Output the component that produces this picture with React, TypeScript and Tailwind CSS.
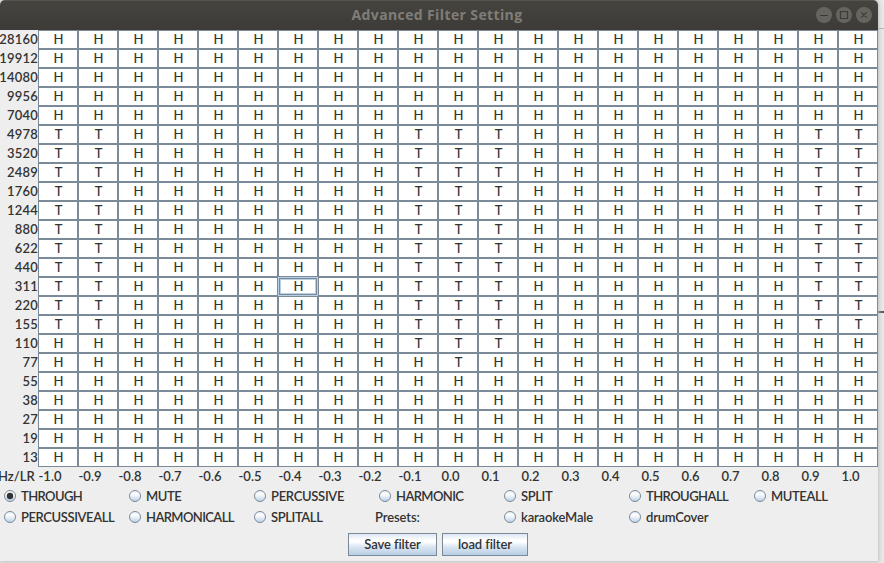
const frequencies = [
  '28160', '19912', '14080', '9956', '7040', '4978', '3520', '2489', '1760', '1244', '880', '622',
  '440', '311', '220', '155', '110', '77', '55', '38', '27', '19', '13',
];
const pans = [
  '-1.0', '-0.9', '-0.8', '-0.7', '-0.6', '-0.5', '-0.4', '-0.3', '-0.2', '-0.1', '0.0',
  '0.1', '0.2', '0.3', '0.4', '0.5', '0.6', '0.7', '0.8', '0.9', '1.0',
];

function modeAt(row: number, col: number) {
  const edge = col < 2 || col > 18;
  const center = col >= 9 && col <= 11;
  if (row >= 5 && row <= 15 && (edge || center)) return 'T';
  if (row === 16 && center) return 'T';
  if (row === 17 && col === 10) return 'T';
  return 'H';
}

function Cell({ row, col }: { row: number; col: number }) {
  const focused = row === 13 && col === 6;
  return (
    <div className={`h-[19px] w-10 border bg-white ${focused ? 'border-[#b8cfe5]' : 'border-[#7a8a99]'}`}>
      <div
        className={`flex h-full items-center justify-center pl-px text-[13px] font-medium leading-none ${
          focused ? 'shadow-[inset_0_0_0_1px_#7a8a99,inset_0_0_0_2px_#b8cfe5]' : ''
        }`}
      >
        <span>{modeAt(row, col)}</span>
      </div>
    </div>
  );
}

function Radio({ label, checked = false, spacing }: { label: string; checked?: boolean; spacing: string }) {
  return (
    <div className="flex h-[21px] w-[125px] items-center">
      <svg className="mb-px ml-1 mr-[5px] h-3 w-3 shrink-0" viewBox="0 0 12 12">
        <circle cx="6" cy="6" r="5.5" fill="url(#metal)" stroke="#7a8a99" />
        {checked && <circle cx="6" cy="6" r="3.2" fill="#333" />}
      </svg>
      <span className={`whitespace-nowrap ${spacing}`}>{label}</span>
    </div>
  );
}

function Button({ label, width }: { label: string; width: string }) {
  return (
    <button
      className={`h-[23px] border border-[#7a8a99] bg-[linear-gradient(#dde8f3_0%,#ffffff_30%,#ffffff_38%,#dde8f3_58%,#b8cfe5_100%)] leading-none ${width}`}
    >
      {label}
    </button>
  );
}

export default function App() {
  return (
    <div className="relative h-[563px] w-[884px] overflow-hidden bg-[#e9e9e9] font-[Lato,sans-serif] text-[13px] font-semibold leading-none text-[#333]">
      <svg className="absolute h-0 w-0">
        <defs>
          <linearGradient id="metal" x1="0" y1="0" x2="0" y2="1">
            <stop offset="0" stopColor="#e3edf6" />
            <stop offset=".3" stopColor="#fff" />
            <stop offset=".5" stopColor="#edf3f9" />
            <stop offset="1" stopColor="#b8cfe5" />
          </linearGradient>
        </defs>
      </svg>
      <div className="absolute right-0 top-7 h-px w-[6px] bg-[#b5b5b5]" />
      <div className="absolute right-0 top-[311px] h-[2px] w-[6px] bg-[#555]" />
      <main className="relative h-[561px] w-[878px] overflow-hidden rounded-t-[5px] bg-[#eee] shadow-[0_0_4px_1px_#bdbdbd]">
        <header className="relative flex h-[30px] items-center justify-center border-t border-[#55534d] bg-linear-to-b from-[#45443f] to-[#3c3b37]">
          <h1 className="-translate-x-[2px] -translate-y-px font-['Open_Sans',sans-serif] text-[14px] font-bold tracking-[0.38px] text-[#807d78]">
            Advanced Filter Setting
          </h1>
          <svg className="absolute right-[5px] top-[5px] h-[18px] w-[58px]" viewBox="0 0 58 18" fill="none" stroke="#3c3b37">
            <g fill="#66645e" stroke="none">
              <circle cx="9" cy="9" r="8" />
              <circle cx="29" cy="9" r="8" />
              <circle cx="49" cy="9" r="8" />
            </g>
            <path d="M5 9.5h8M25.5 5.5h7v7h-7zM46.3 6.3l5.4 5.4M51.7 6.3l-5.4 5.4" strokeWidth="1.2" />
          </svg>
        </header>
        <section>
          {frequencies.map((frequency, row) => (
            <div key={frequency} className="flex">
              <div className="flex h-[19px] w-[38px] items-center justify-end tracking-[0.2px]">
                <span>{frequency}</span>
              </div>
              {pans.map((pan, col) => (
                <Cell key={pan} row={row} col={col} />
              ))}
            </div>
          ))}
          <div className="flex h-[19px] items-center">
            <span className="-ml-[2px] w-10 whitespace-nowrap">Hz/LR</span>
            {pans.map((pan, i) => (
              <span key={pan} className={`w-10 ${i < 10 ? 'pl-[0.5px]' : 'pl-[3.5px]'}`}>{pan}</span>
            ))}
          </div>
        </section>
        <section className="flex">
          <Radio label="THROUGH" checked spacing="tracking-[-0.6px]" />
          <Radio label="MUTE" spacing="tracking-[-0.4px]" />
          <Radio label="PERCUSSIVE" spacing="tracking-[-0.3px]" />
          <Radio label="HARMONIC" spacing="tracking-[-0.6px]" />
          <Radio label="SPLIT" spacing="tracking-[-0.4px]" />
          <Radio label="THROUGHALL" spacing="tracking-[-0.55px]" />
          <Radio label="MUTEALL" spacing="tracking-[-0.4px]" />
        </section>
        <section className="flex">
          <Radio label="PERCUSSIVEALL" spacing="tracking-[-0.4px]" />
          <Radio label="HARMONICALL" spacing="tracking-[-0.6px]" />
          <Radio label="SPLITALL" spacing="tracking-[-0.4px]" />
          <div className="flex h-[21px] w-[125px] items-center tracking-[-0.1px]">Presets:</div>
          <Radio label="karaokeMale" spacing="tracking-[-0.15px]" />
          <Radio label="drumCover" spacing="tracking-[-0.2px]" />
        </section>
        <footer className="flex justify-center gap-[5px] pr-[2px] pt-[5px] tracking-[-0.1px]">
          <Button label="Save filter" width="w-[89px]" />
          <Button label="load filter" width="w-[86px]" />
        </footer>
      </main>
    </div>
  );
}
